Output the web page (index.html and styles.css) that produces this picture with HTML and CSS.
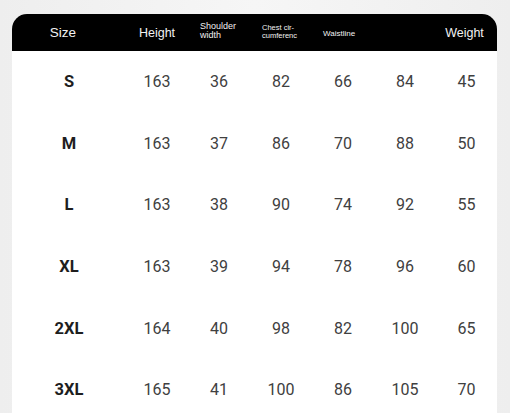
FILE: index.html
```html
<!DOCTYPE html>
<html>
<head>
<meta charset="utf-8">
<link rel="stylesheet" href="styles.css">
</head>
<body>
<div class="card">
  <div class="head">
    <div class="hc h-size">Size</div>
    <div class="hc h-mid">Height</div>
    <div class="hc h-small">Shoulder<br>width</div>
    <div class="hc h-tiny">Chest cir-<br>cumferenc</div>
    <div class="hc h-waist">Waistline</div>
    <div class="hc"></div>
    <div class="hc h-mid h-weight">Weight</div>
  </div>
  <div class="row"><div class="sz">S</div><div>163</div><div>36</div><div>82</div><div>66</div><div>84</div><div>45</div></div>
  <div class="row"><div class="sz">M</div><div>163</div><div>37</div><div>86</div><div>70</div><div>88</div><div>50</div></div>
  <div class="row"><div class="sz">L</div><div>163</div><div>38</div><div>90</div><div>74</div><div>92</div><div>55</div></div>
  <div class="row"><div class="sz">XL</div><div>163</div><div>39</div><div>94</div><div>78</div><div>96</div><div>60</div></div>
  <div class="row"><div class="sz">2XL</div><div>164</div><div>40</div><div>98</div><div>82</div><div>100</div><div>65</div></div>
  <div class="row"><div class="sz">3XL</div><div>165</div><div>41</div><div>100</div><div>86</div><div>105</div><div>70</div></div>
</div>
</body>
</html>
```
FILE: styles.css
```css
html, body {
  margin: 0;
  height: 100%;
  overflow: hidden;
}
body {
  background: linear-gradient(90deg, #eeeeee 0%, #f6f6f6 50%, #eeeeee 100%);
  padding: 14px 0 0 12px;
  box-sizing: border-box;
  font-family: Roboto, "Liberation Sans", sans-serif;
}
.card {
  width: 485px;
  background: #ffffff;
  border-radius: 15px 15px 0 0;
}
.head, .row {
  display: grid;
  grid-template-columns: 114px repeat(5, 62px) 61px;
}
.head {
  height: 37px;
  background: #000;
  border-radius: 15px 15px 0 0;
  color: #f2f2f2;
}
.hc {
  display: flex;
  align-items: center;
  font-family: "Liberation Sans", Arial, sans-serif;
}
.h-size {
  justify-content: center;
  padding-right: 12px;
  font-size: 13.5px;
}
.h-mid {
  justify-content: center;
  font-size: 12.5px;
  padding-top: 1px;
}
.h-weight {
  padding-right: 4px;
}
.h-small {
  padding-left: 12px;
  font-size: 9px;
  line-height: 9px;
  padding-bottom: 3px;
}
.h-tiny {
  padding-left: 12px;
  font-size: 7.5px;
  line-height: 8.5px;
  padding-bottom: 1px;
}
.h-waist {
  padding-left: 11px;
  font-size: 8px;
  padding-top: 2px;
}
.row {
  height: 61.6px;
  align-items: center;
  text-align: center;
  font-size: 16px;
  color: #404040;
}
.row .sz {
  font-weight: bold;
  color: #1e1e1e;
  font-size: 16.5px;
}
```
